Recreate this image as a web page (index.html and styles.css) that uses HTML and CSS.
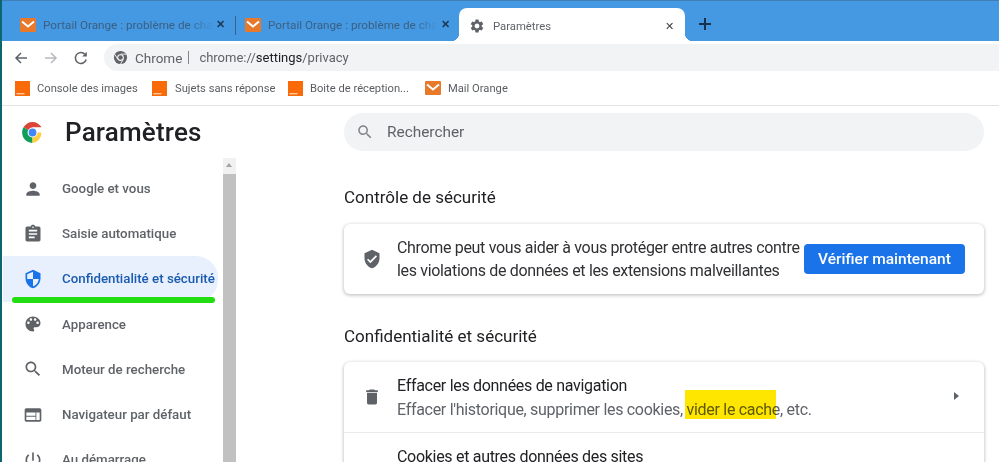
FILE: index.html
```html
<!DOCTYPE html>
<html>

<head>
	<title>Paramètres</title>
	<link rel="stylesheet" href="styles.css">
</head>

<body>
	<svg class="defs" width="0" height="0">
		<symbol id="mail" viewBox="0 0 16 14">
			<rect width="16" height="14" rx="1" fill="#e8792b" />
			<path d="M2 3.5l6 5 6-5" fill="none" stroke="#fff" stroke-width="2" />
		</symbol>
		<symbol id="orange" viewBox="0 0 15 15">
			<rect width="15" height="15" fill="#f96a09" />
			<rect x="1.5" y="12" width="8" height="1.4" fill="#fbc9a0" />
		</symbol>
		<symbol id="gear" viewBox="0 0 24 24">
			<path d="M19.14 12.94c.04-.3.06-.61.06-.94 0-.32-.02-.64-.07-.94l2.03-1.58c.18-.14.23-.41.12-.61l-1.92-3.32c-.12-.22-.37-.29-.59-.22l-2.39.96c-.5-.38-1.03-.7-1.62-.94l-.36-2.54c-.04-.24-.24-.41-.48-.41h-3.84c-.24 0-.43.17-.47.41l-.36 2.54c-.59.24-1.13.57-1.62.94l-2.39-.96c-.22-.08-.47 0-.59.22L2.74 8.87c-.12.21-.08.47.12.61l2.03 1.58c-.05.3-.09.63-.09.94s.02.64.07.94l-2.03 1.58c-.18.14-.23.41-.12.61l1.92 3.32c.12.22.37.29.59.22l2.39-.96c.5.38 1.03.7 1.62.94l.36 2.54c.05.24.24.41.48.41h3.84c.24 0 .44-.17.47-.41l.36-2.54c.59-.24 1.13-.56 1.62-.94l2.39.96c.22.08.47 0 .59-.22l1.92-3.32c.12-.22.07-.47-.12-.61l-2.01-1.58zM12 15.6c-1.98 0-3.6-1.62-3.6-3.6s1.62-3.6 3.6-3.6 3.6 1.62 3.6 3.6-1.62 3.6-3.6 3.6z" />
		</symbol>
		<symbol id="search" viewBox="0 0 24 24">
			<path d="M15.5 14h-.79l-.28-.27C15.41 12.59 16 11.11 16 9.5 16 5.91 13.09 3 9.5 3S3 5.91 3 9.5 5.91 16 9.5 16c1.61 0 3.09-.59 4.23-1.57l.27.28v.79l5 4.99L20.49 19l-4.99-5zm-6 0C7.01 14 5 11.99 5 9.5S7.01 5 9.5 5 14 7.01 14 9.5 11.99 14 9.5 14z" />
		</symbol>
	</svg>

	<!-- Barre des onglets -->
	<div class="tabstrip">
		<div class="tab">
			<svg class="tab-icon"><use href="#mail" /></svg>
			<span class="tab-title">Portail Orange : problème de cha</span>
			<span class="tab-close">✕</span>
		</div>
		<div class="tab tab-sep">
			<svg class="tab-icon"><use href="#mail" /></svg>
			<span class="tab-title">Portail Orange : problème de cha</span>
			<span class="tab-close">✕</span>
		</div>
		<div class="tab tab-active">
			<svg class="gear-icon"><use href="#gear" /></svg>
			<span class="tab-title">Paramètres</span>
			<span class="tab-close">✕</span>
		</div>
		<svg class="new-tab" viewBox="0 0 14 14"><path d="M7 1v12M1 7h12" /></svg>
	</div>

	<!-- Barre d'adresse -->
	<div class="toolbar">
		<svg class="nav-btn" viewBox="0 0 16 16"><path d="M14 8H3M8 3L3 8l5 5" /></svg>
		<svg class="nav-btn nav-off" viewBox="0 0 16 16"><path d="M2 8h11M8 3l5 5-5 5" /></svg>
		<svg class="nav-btn" viewBox="0 0 16 16"><path d="M13.2 9.5A5.5 5.5 0 1 1 12 4.3" /><path class="nav-fill" d="M13.8 1.8v4.6H9.2z" /></svg>
		<div class="omnibox">
			<svg class="site-icon" viewBox="0 0 16 16">
				<circle cx="8" cy="8" r="7" fill="#5f6368" />
				<circle cx="8" cy="8" r="3.6" fill="#f1f3f4" />
				<circle cx="8" cy="8" r="2.4" fill="#5f6368" />
				<path d="M8 4.4h6.2M5 9.8L1.9 4.5M11 9.8l-3.1 5.4" stroke="#f1f3f4" stroke-width="1" />
			</svg>
			<span class="site-name">Chrome</span>
			<span class="site-bar"></span>
			<span class="url">chrome://<b>settings</b>/privacy</span>
		</div>
	</div>

	<!-- Favoris -->
	<div class="bookmarks">
		<div class="bookmark bm1"><svg class="bm-icon"><use href="#orange" /></svg>Console des images</div>
		<div class="bookmark bm2"><svg class="bm-icon"><use href="#orange" /></svg>Sujets sans réponse</div>
		<div class="bookmark bm3"><svg class="bm-icon"><use href="#orange" /></svg>Boite de réception...</div>
		<div class="bookmark"><svg class="bm-mail"><use href="#mail" /></svg>Mail Orange</div>
	</div>

	<div class="page">
		<div class="sidebar">
			<div class="brand">
				<svg class="logo" viewBox="0 0 48 48">
					<path d="M24 24L6.7 14A20 20 0 0 1 41.3 14H24z" fill="#db4437" />
					<path d="M24 24L6.7 14A20 20 0 0 0 24 44z" fill="#0f9d58" />
					<path d="M24 24H41.3A20 20 0 0 1 24 44z" fill="#ffcd40" />
					<circle cx="24" cy="24" r="9.5" fill="#fff" />
					<circle cx="24" cy="24" r="7.5" fill="#4285f4" />
				</svg>
				<span class="brand-name">Paramètres</span>
			</div>
			<div class="nav-wrap">
				<div class="nav">
					<div class="nav-item">
						<svg class="nav-icon" viewBox="0 0 24 24"><path d="M12 12c2.21 0 4-1.79 4-4s-1.79-4-4-4-4 1.79-4 4 1.79 4 4 4zm0 2c-2.67 0-8 1.34-8 4v2h16v-2c0-2.66-5.33-4-8-4z" /></svg>
						Google et vous
					</div>
					<div class="nav-item">
						<svg class="nav-icon" viewBox="0 0 24 24"><path d="M19 3h-4.18C14.4 1.84 13.3 1 12 1c-1.3 0-2.4.84-2.82 2H5c-1.1 0-2 .9-2 2v14c0 1.1.9 2 2 2h14c1.1 0 2-.9 2-2V5c0-1.1-.9-2-2-2zm-7 0c.55 0 1 .45 1 1s-.45 1-1 1-1-.45-1-1 .45-1 1-1zm2 14H7v-2h7v2zm3-4H7v-2h10v2zm0-4H7V7h10v2z" /></svg>
						Saisie automatique
					</div>
					<div class="nav-item nav-active">
						<svg class="nav-icon" viewBox="0 0 24 24"><path d="M12 1L3 5v6c0 5.55 3.84 10.74 9 12 5.16-1.26 9-6.45 9-12V5l-9-4zm0 10.99h7c-.53 4.12-3.28 7.79-7 8.94V12H5V6.3l7-3.11v8.8z" /></svg>
						Confidentialité et sécurité
						<span class="green-line"></span>
					</div>
					<div class="nav-item">
						<svg class="nav-icon" viewBox="0 0 24 24"><path d="M12 3c-4.97 0-9 4.03-9 9s4.03 9 9 9c.83 0 1.5-.67 1.5-1.5 0-.39-.15-.74-.39-1.01-.23-.26-.38-.61-.38-.99 0-.83.67-1.5 1.5-1.5H16c2.76 0 5-2.24 5-5 0-4.42-4.03-8-9-8zm-5.5 9c-.83 0-1.5-.67-1.5-1.5S5.67 9 6.5 9 8 9.67 8 10.5 7.33 12 6.5 12zm3-4C8.67 8 8 7.33 8 6.5S8.67 5 9.5 5s1.5.67 1.5 1.5S10.33 8 9.5 8zm5 0c-.83 0-1.5-.67-1.5-1.5S13.67 5 14.5 5s1.5.67 1.5 1.5S15.33 8 14.5 8zm3 4c-.83 0-1.5-.67-1.5-1.5S16.67 9 17.5 9s1.5.67 1.5 1.5-.67 1.5-1.5 1.5z" /></svg>
						Apparence
					</div>
					<div class="nav-item">
						<svg class="nav-icon"><use href="#search" /></svg>
						Moteur de recherche
					</div>
					<div class="nav-item">
						<svg class="nav-icon" viewBox="0 0 24 24"><path d="M20 4H4c-1.1 0-1.99.9-1.99 2L2 18c0 1.1.9 2 2 2h16c1.1 0 2-.9 2-2V6c0-1.1-.9-2-2-2zm-5 14H4v-4h11v4zm0-5H4V9h11v4zm5 5h-4V9h4v9z" /></svg>
						Navigateur par défaut
					</div>
					<div class="nav-item">
						<svg class="nav-icon" viewBox="0 0 24 24"><path d="M13 3h-2v10h2V3zm4.83 2.17l-1.42 1.42C17.99 7.86 19 9.81 19 12c0 3.87-3.13 7-7 7s-7-3.13-7-7c0-2.19 1.01-4.14 2.58-5.42L6.17 5.17C4.23 6.82 3 9.26 3 12c0 4.97 4.03 9 9 9s9-4.03 9-9c0-2.74-1.23-5.18-3.17-6.83z" /></svg>
						Au démarrage
					</div>
				</div>
				<div class="scrollbar">
					<div class="scroll-up"></div>
				</div>
			</div>
		</div>

		<div class="main">
			<div class="search">
				<svg class="search-icon"><use href="#search" /></svg>
				Rechercher
			</div>

			<h2 class="section-title">Contrôle de sécurité</h2>
			<div class="card safety">
				<svg class="row-icon" viewBox="0 0 24 24"><path d="M12 1L3 5v6c0 5.55 3.84 10.74 9 12 5.16-1.26 9-6.45 9-12V5l-9-4zm-2 16l-4-4 1.41-1.41L10 14.17l6.59-6.59L18 9l-8 8z" /></svg>
				<div class="safety-text">Chrome peut vous aider à vous protéger entre autres contre<br>les violations de données et les extensions malveillantes</div>
				<button class="btn">Vérifier maintenant</button>
			</div>

			<h2 class="section-title section-two">Confidentialité et sécurité</h2>
			<div class="card">
				<div class="row">
					<svg class="row-icon" viewBox="0 0 24 24"><path d="M6 19c0 1.1.9 2 2 2h8c1.1 0 2-.9 2-2V7H6v12zM19 4h-3.5l-1-1h-5l-1 1H5v2h14V4z" /></svg>
					<div class="row-text">
						<div class="row-title">Effacer les données de navigation</div>
						<div class="row-sub">Effacer l'historique, supprimer les cookies, <span class="mark-wrap"><span class="mark"></span>vider le cache</span>, etc.</div>
					</div>
					<span class="row-arrow"></span>
				</div>
				<div class="row row-next">
					<svg class="row-icon cookie-icon" viewBox="0 0 24 24"><circle cx="12" cy="12" r="9" /></svg>
					<div class="row-text">
						<div class="row-title">Cookies et autres données des sites</div>
					</div>
				</div>
			</div>
		</div>
	</div>
</body>

</html>
```

FILE: styles.css
```css
html,
body {
	margin: 0;
	height: 462px;
	overflow: hidden;
}

body {
	width: 999px;
	background-color: #fff;
	font-family: Roboto, Arial, sans-serif;
	color: #202124;
	box-sizing: border-box;
	border-left: 2px solid #0d6570;
}

.defs {
	position: absolute;
}

/* Onglets */
.tabstrip {
	display: flex;
	height: 41px;
	padding-left: 8px;
	background-color: #4599e2;
	border-top: 1px solid #3f7fb5;
	box-sizing: border-box;
}

.tab {
	display: flex;
	align-items: center;
	width: 225px;
	height: 33px;
	margin-top: 7px;
	padding: 0 8px 0 10px;
	box-sizing: border-box;
	font-size: 11.7px;
	color: #3b5f82;
	position: relative;
}

.tab-sep::before {
	content: "";
	position: absolute;
	left: 0;
	top: 8px;
	height: 19px;
	width: 1px;
	background-color: #35618a;
}

.tab-icon {
	width: 16px;
	height: 14px;
	flex: none;
	margin-right: 7px;
}

.tab-title {
	white-space: nowrap;
	-webkit-mask-image: linear-gradient(to right, #000 86%, transparent 100%);
	mask-image: linear-gradient(to right, #000 86%, transparent 100%);
}

.tab-close {
	font-size: 11px;
	font-weight: bold;
	color: #1c3854;
	margin-left: auto;
	width: 14px;
	text-align: center;
}

.tab-active {
	width: 226px;
	height: 36px;
	margin-left: -1px;
	padding: 0 9px 0 10px;
	background-color: #fff;
	border-radius: 8px 8px 0 0;
	font-size: 11.3px;
	color: #5f6368;
}

.tab-active .tab-title {
	-webkit-mask-image: none;
	mask-image: none;
}

.tab-active::before,
.tab-active::after {
	content: "";
	position: absolute;
	bottom: 3px;
	width: 8px;
	height: 8px;
}

.tab-active::before {
	left: -8px;
	background: radial-gradient(circle at 0 0, transparent 8px, #fff 8.5px);
}

.tab-active::after {
	right: -8px;
	background: radial-gradient(circle at 100% 0, transparent 8px, #fff 8.5px);
}

.tab-active .tab-close {
	font-weight: normal;
	color: #3c4043;
}

.gear-icon {
	width: 16px;
	height: 16px;
	margin-right: 8px;
	fill: #5f6368;
	flex: none;
}

.new-tab {
	width: 14px;
	height: 14px;
	margin: 16px 0 0 13px;
	fill: none;
	stroke: #16324d;
	stroke-width: 2;
}

/* Barre d'adresse */
.toolbar {
	display: flex;
	align-items: flex-start;
	height: 30px;
	padding-left: 11px;
	background-color: #fff;
}

.nav-btn {
	width: 16px;
	height: 16px;
	margin: 9px 14px 0 0;
	fill: none;
	stroke: #5f6368;
	stroke-width: 1.5;
}

.nav-off {
	stroke: #b6b9bd;
}

.nav-fill {
	fill: #5f6368;
	stroke: none;
}

.omnibox {
	flex: 1;
	display: flex;
	align-items: center;
	height: 27px;
	margin: 3px 0 0 1px;
	padding-left: 9px;
	background-color: #f1f3f4;
	border-radius: 14px 0 0 14px;
	font-size: 13.5px;
	color: #5f6368;
}

.site-icon {
	width: 15px;
	height: 15px;
	margin-right: 7px;
}

.site-bar {
	width: 1px;
	height: 13px;
	margin: 0 10px 0 6px;
	background-color: #80868b;
}

.url {
	font-size: 13px;
}

.url b {
	font-weight: normal;
	color: #202124;
}

/* Favoris */
.bookmarks {
	display: flex;
	align-items: center;
	height: 35px;
	padding-left: 13px;
	border-bottom: 1px solid #e3e3e3;
	font-size: 11.2px;
	color: #5a5e62;
	box-sizing: border-box;
}

.bookmark {
	display: flex;
	align-items: center;
}

.bm1 {
	width: 137px;
}

.bm2 {
	width: 136px;
}

.bm2 .bm-icon {
	margin-right: 8px;
}

.bm3 {
	width: 137px;
}

.bm-icon {
	width: 15px;
	height: 15px;
	margin-right: 7px;
}

.bm-mail {
	width: 16px;
	height: 14px;
	margin-right: 7px;
}

/* Page */
.page {
	display: flex;
	height: 356px;
	overflow: hidden;
}

.sidebar {
	width: 340px;
	flex: none;
}

.brand {
	display: flex;
	align-items: center;
	height: 52px;
	padding-left: 18px;
}

.logo {
	width: 25px;
	height: 25px;
	margin-right: 20px;
}

.brand-name {
	font-size: 26px;
	font-weight: 500;
	color: #202124;
	letter-spacing: 0.2px;
}

.nav-wrap {
	display: flex;
	height: 304px;
}

.nav {
	width: 221px;
	flex: none;
	padding-top: 8px;
}

.nav-item {
	display: flex;
	align-items: center;
	height: 45.2px;
	margin-right: 5px;
	padding-left: 21px;
	font-size: 13.3px;
	font-weight: 500;
	color: #5f6368;
	position: relative;
	white-space: nowrap;
}

.nav-icon {
	width: 20px;
	height: 20px;
	margin-right: 19px;
	fill: #5f6368;
	flex: none;
}

.nav-active {
	margin-left: 1px;
	padding-left: 20px;
	background-color: #e8f0fe;
	border-radius: 0 22px 22px 0;
	color: #1a5bb0;
}

.nav-active .nav-icon {
	fill: #1a73e8;
}

.green-line {
	position: absolute;
	left: 9px;
	right: 3px;
	bottom: -1px;
	height: 6px;
	border-radius: 3px;
	background-color: #22dd11;
}

.scrollbar {
	width: 13px;
	background-color: #c1c1c1;
}

.scroll-up {
	height: 16px;
	background-color: #f1f1f1;
	position: relative;
}

.scroll-up::after {
	content: "";
	position: absolute;
	left: 3px;
	top: 5px;
	border: 3.5px solid transparent;
	border-top: none;
	border-bottom: 4px solid #a3a3a3;
}

/* Contenu */
.main {
	width: 642px;
	flex: none;
}

.search {
	display: flex;
	align-items: center;
	height: 38px;
	margin: 7px 0 0 2px;
	padding-left: 12px;
	background-color: #f1f3f4;
	border-radius: 19px;
	font-size: 15.4px;
	color: #5f6368;
}

.search-icon {
	width: 18px;
	height: 18px;
	margin-right: 13px;
	fill: #80868b;
}

.section-title {
	margin: 35px 0 16px 2px;
	font-size: 17px;
	line-height: 22px;
	font-weight: normal;
	color: #202124;
}

.section-two {
	margin-top: 31px;
	margin-bottom: 15px;
}

.card {
	margin-left: 2px;
	background-color: #fff;
	border-radius: 6px;
	box-shadow: 0 1px 3px 1px rgba(60, 64, 67, 0.25);
}

.safety {
	display: flex;
	align-items: center;
	height: 70px;
	padding: 0 19px 0 18px;
}

.row-icon {
	width: 20px;
	height: 20px;
	margin-right: 15px;
	fill: #5f6368;
	flex: none;
}

.safety-text {
	font-size: 16px;
	letter-spacing: -0.33px;
	line-height: 23px;
	white-space: nowrap;
	color: #303134;
}

.btn {
	width: 161px;
	height: 30px;
	margin-left: auto;
	background-color: #1a73e8;
	color: white;
	border: none;
	border-radius: 4px;
	font-family: Roboto, Arial, sans-serif;
	font-size: 15.5px;
	font-weight: 500;
	flex: none;
}

.row {
	display: flex;
	align-items: center;
	height: 71px;
	padding-left: 18px;
	border-bottom: 1px solid #e8eaed;
	box-sizing: border-box;
	position: relative;
}

.row-text {
	margin-top: 1px;
}

.row-next {
	border-bottom: none;
	align-items: flex-start;
	padding-top: 11px;
}

.cookie-icon {
	margin-top: 16px;
}

.row-title {
	font-size: 16px;
	letter-spacing: -0.3px;
	line-height: 24px;
	white-space: nowrap;
}

.row-sub {
	font-size: 16px;
	letter-spacing: -0.3px;
	line-height: 24px;
	white-space: nowrap;
	color: #5f6368;
}

.mark-wrap {
	position: relative;
}

.mark {
	position: absolute;
	left: -2px;
	top: -10px;
	width: 91px;
	height: 29px;
	background-color: #ffe600;
	mix-blend-mode: multiply;
}

.row-arrow {
	position: absolute;
	right: 25px;
	top: 30px;
	border: 4.5px solid transparent;
	border-right: none;
	border-left: 5px solid #5f6368;
}
```
